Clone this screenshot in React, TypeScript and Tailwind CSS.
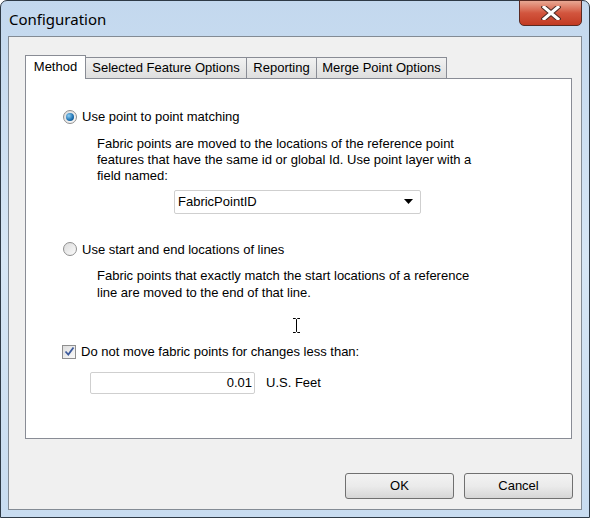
import React from 'react';

const tabs = [
  { label: 'Method', width: 61, active: true },
  { label: 'Selected Feature Options', width: 162 },
  { label: 'Reporting', width: 71 },
  { label: 'Merge Point Options', width: 131 },
];

function Radio({ checked }: { checked?: boolean }) {
  return (
    <span className="w-[14px] h-[14px] rounded-full border border-[#8f8f8f] bg-gradient-to-br from-[#dcdcdc] to-[#fbfbfb] flex items-center justify-center shrink-0">
      {checked && (
        <span className="w-[8px] h-[8px] rounded-full bg-[radial-gradient(circle_at_35%_35%,#8fd0f5,#1b6fb0_60%,#0c3f6e)]" />
      )}
    </span>
  );
}

function Checkbox() {
  return (
    <span className="w-[14px] h-[14px] border border-[#8f8f8f] bg-gradient-to-br from-[#dedede] to-[#fafafa] flex items-center justify-center shrink-0">
      <svg width="11" height="11" viewBox="0 0 11 11">
        <path d="M1.5 5.5 L4.3 8.5 L9.5 1.5" fill="none" stroke="#3c5a9c" strokeWidth="1.8" />
      </svg>
    </span>
  );
}

export default function App() {
  return (
    <div className="w-[590px] h-[518px] rounded-t-[7px] border border-[#2e3a46] bg-gradient-to-b from-[#c3d8ee] via-[#d6e6f5] to-[#c8dcf0] flex flex-col font-['Liberation_Sans',Arial,sans-serif] text-[13px] text-black">
      {/* Title bar */}
      <div className="h-[35px] flex items-start justify-between pl-[8px] pr-[7px]">
        <span className="mt-[8px] text-[15px] font-['Noto_Sans',sans-serif] text-black leading-[20px]">
          Configuration
        </span>
        <div className="w-[63px] h-[26px] mt-[-1px] rounded-b-[5px] border border-[#5a2a22] bg-gradient-to-b from-[#e8a793] via-[#d2553e] to-[#c23a22] flex items-center justify-center">
          <svg width="20" height="14" viewBox="0 0 20 14">
            <path d="M3 1 L17 13 M17 1 L3 13" stroke="#4a2a25" strokeWidth="5" strokeLinecap="square" />
            <path d="M3 1 L17 13 M17 1 L3 13" stroke="#ffffff" strokeWidth="3" strokeLinecap="square" />
          </svg>
        </div>
      </div>

      {/* Client area */}
      <div className="mx-[7px] mb-[7px] flex-1 border border-[#838b94] bg-[#f0f0f0] flex flex-col">
        <div className="pt-[17px] pl-[16px] pr-[9px]">
          {/* Tabs */}
          <div className="flex items-end h-[24px]">
            {tabs.map(t =>
              t.active ? (
                <div
                  key={t.label}
                  className="h-[24px] w-[61px] bg-white border border-b-0 border-[#898c95] flex items-center justify-center relative z-10 mb-[-1px] pb-[1px]"
                >
                  {t.label}
                </div>
              ) : (
                <div
                  key={t.label}
                  style={{ width: t.width }}
                  className="h-[21px] bg-gradient-to-b from-[#f2f2f2] to-[#dedede] border border-b-0 border-[#898c95] -ml-px first:ml-0 flex items-center justify-center"
                >
                  {t.label}
                </div>
              ),
            )}
          </div>

          {/* Panel */}
          <div className="h-[361px] bg-white border border-[#898c95] pl-[37px] pt-[28px]">
            <div className="flex items-center gap-[5px]">
              <Radio checked />
              <span>Use point to point matching</span>
            </div>
            <div className="pl-[34px] mt-[9px] leading-[16px]">
              <p>Fabric points are moved to the locations of the reference point</p>
              <p>features that have the same id or global Id. Use point layer with a</p>
              <p>field named:</p>
            </div>
            <div className="ml-[111px] mt-[6px] w-[247px] h-[24px] border border-[#cfcfcf] rounded-[2px] flex items-center justify-between pl-[3px] pr-[7px]">
              <span>FabricPointID</span>
              <svg width="9" height="5" viewBox="0 0 9 5">
                <path d="M0 0 H9 L4.5 5 Z" fill="#000" />
              </svg>
            </div>

            <div className="flex items-center gap-[5px] mt-[26px]">
              <Radio />
              <span>Use start and end locations of lines</span>
            </div>
            <div className="pl-[34px] mt-[8px] leading-[17px]">
              <p>Fabric points that exactly match the start locations of a reference</p>
              <p>line are moved to the end of that line.</p>
            </div>

            <div className="h-[41px] relative">
              <svg className="absolute left-[230px] top-[17px]" width="7" height="15" viewBox="0 0 7 15">
                <path d="M0 0.5 H2.5 L3.5 1.5 L4.5 0.5 H7 M3.5 1.5 V13.5 M0 14.5 H2.5 L3.5 13.5 L4.5 14.5 H7" fill="none" stroke="#000" strokeWidth="1" />
              </svg>
            </div>

            <div className="flex items-center gap-[5px] -ml-[1px]">
              <Checkbox />
              <span>Do not move fabric points for changes less than:</span>
            </div>
            <div className="flex items-center mt-[10px] ml-[27px]">
              <div className="w-[165px] h-[22px] border border-[#cfcfcf] rounded-[2px] flex items-center justify-end pr-[2px] bg-white">
                0.01
              </div>
              <span className="ml-[11px]">U.S. Feet</span>
            </div>
          </div>
        </div>

        {/* Buttons */}
        <div className="flex justify-end gap-[10px] pr-[8px] mt-[34px]">
          <button className="w-[109px] h-[26px] rounded-[3px] border border-[#707070] bg-gradient-to-b from-[#f2f2f2] via-[#ebebeb] to-[#d6d6d6] text-[13px]">
            OK
          </button>
          <button className="w-[109px] h-[26px] rounded-[3px] border border-[#707070] bg-gradient-to-b from-[#f2f2f2] via-[#ebebeb] to-[#d6d6d6] text-[13px]">
            Cancel
          </button>
        </div>
      </div>
    </div>
  );
}
